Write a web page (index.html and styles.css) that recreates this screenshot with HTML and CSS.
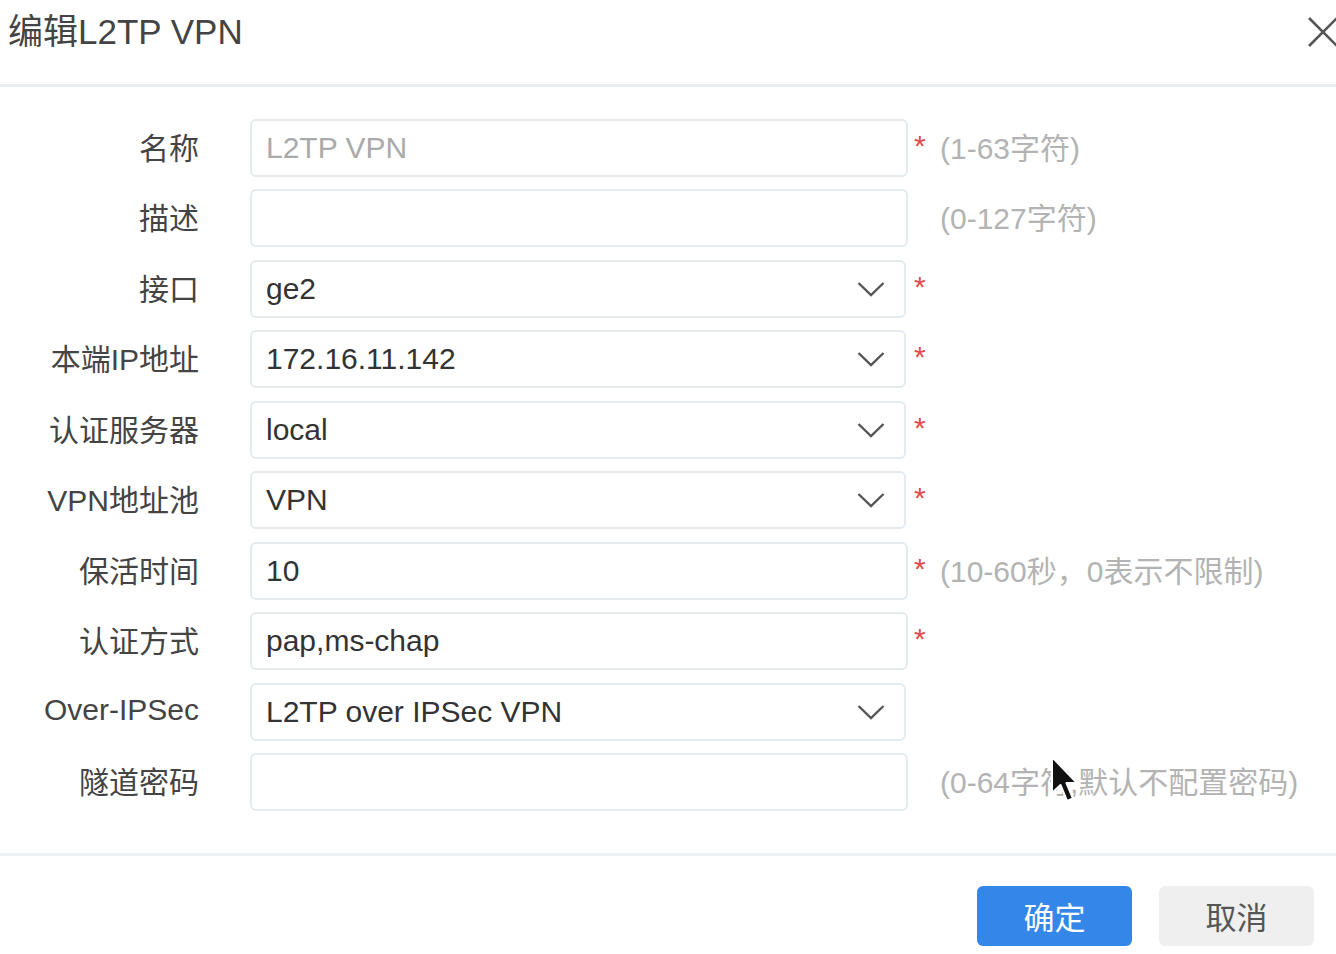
FILE: index.html
```html
<!DOCTYPE html>
<html lang="zh-CN">
<head>
    <meta charset="UTF-8">
    <title>编辑L2TP VPN</title>
    <link rel="stylesheet" href="styles.css">
</head>
<body>
    <div class="dialog">
        <div class="dialog-header">
            <h1 class="dialog-title">编辑L2TP VPN</h1>
            <svg class="close-btn" width="32" height="32" viewBox="0 0 32 32">
                <path d="M2 2 L30 30 M30 2 L2 30" stroke="#555" stroke-width="2.6" fill="none"/>
            </svg>
        </div>

        <div class="form">
            <div class="row">
                <label class="label">名称</label>
                <input class="field disabled" type="text" value="L2TP VPN">
                <span class="mark">*</span>
                <span class="hint">(1-63字符)</span>
            </div>
            <div class="row">
                <label class="label">描述</label>
                <input class="field" type="text" value="">
                <span class="mark"></span>
                <span class="hint">(0-127字符)</span>
            </div>
            <div class="row">
                <label class="label">接口</label>
                <div class="field select">
                    <span>ge2</span>
                    <svg class="chevron" width="28" height="16" viewBox="0 0 28 16"><path d="M1.5 2 L14 14 L26.5 2" stroke="#555" stroke-width="2.4" fill="none"/></svg>
                </div>
                <span class="mark">*</span>
            </div>
            <div class="row">
                <label class="label">本端IP地址</label>
                <div class="field select">
                    <span>172.16.11.142</span>
                    <svg class="chevron" width="28" height="16" viewBox="0 0 28 16"><path d="M1.5 2 L14 14 L26.5 2" stroke="#555" stroke-width="2.4" fill="none"/></svg>
                </div>
                <span class="mark">*</span>
            </div>
            <div class="row">
                <label class="label">认证服务器</label>
                <div class="field select">
                    <span>local</span>
                    <svg class="chevron" width="28" height="16" viewBox="0 0 28 16"><path d="M1.5 2 L14 14 L26.5 2" stroke="#555" stroke-width="2.4" fill="none"/></svg>
                </div>
                <span class="mark">*</span>
            </div>
            <div class="row">
                <label class="label">VPN地址池</label>
                <div class="field select">
                    <span>VPN</span>
                    <svg class="chevron" width="28" height="16" viewBox="0 0 28 16"><path d="M1.5 2 L14 14 L26.5 2" stroke="#555" stroke-width="2.4" fill="none"/></svg>
                </div>
                <span class="mark">*</span>
            </div>
            <div class="row">
                <label class="label">保活时间</label>
                <input class="field" type="text" value="10">
                <span class="mark">*</span>
                <span class="hint">(10-60秒，0表示不限制)</span>
            </div>
            <div class="row">
                <label class="label">认证方式</label>
                <input class="field" type="text" value="pap,ms-chap">
                <span class="mark">*</span>
            </div>
            <div class="row">
                <label class="label">Over-IPSec</label>
                <div class="field select">
                    <span>L2TP over IPSec VPN</span>
                    <svg class="chevron" width="28" height="16" viewBox="0 0 28 16"><path d="M1.5 2 L14 14 L26.5 2" stroke="#555" stroke-width="2.4" fill="none"/></svg>
                </div>
                <span class="mark"></span>
            </div>
            <div class="row">
                <label class="label">隧道密码</label>
                <input class="field" type="password" value="">
                <span class="mark"></span>
                <span class="hint">(0-64字符,默认不配置密码)</span>
            </div>
        </div>

        <div class="dialog-footer">
            <button class="btn btn-primary">确定</button>
            <button class="btn btn-default">取消</button>
        </div>

        <!-- mouse pointer caught in the screenshot -->
        <svg class="cursor" width="28" height="50" viewBox="0 0 28 50">
            <path d="M2 2 L2 38 L10.5 30 L17 46 L23 43.5 L16.5 28 L27 28 Z" fill="#111" stroke="#fff" stroke-width="2" stroke-linejoin="round"/>
        </svg>
    </div>
</body>
</html>
```

FILE: styles.css
```css
body {
    margin: 0;
    background: #fff;
    font-family: "Liberation Sans", "Noto Sans CJK SC", sans-serif;
    color: #333;
    overflow: hidden;
}
.dialog {
    position: relative;
    width: 1336px;
    height: 954px;
}
.dialog-header {
    display: flex;
    justify-content: space-between;
    align-items: flex-start;
    height: 72px;
    padding: 12px 0 0 8px;
    border-bottom: 3px solid #e8edf2;
}
.dialog-title {
    margin: 0;
    font-size: 35px;
    font-weight: normal;
    line-height: 40px;
    color: #444;
}
.close-btn {
    margin-top: 4px;
    margin-right: -3px;
}
.form {
    display: flex;
    flex-direction: column;
    gap: 12.44px;
    padding-top: 32px;
}
.row {
    display: flex;
    align-items: center;
    height: 58px;
}
.label {
    width: 199px;
    margin-right: 51px;
    padding-bottom: 4px;
    text-align: right;
    font-size: 30px;
    color: #444;
    white-space: nowrap;
}
.field {
    box-sizing: border-box;
    width: 658px;
    height: 58px;
    margin: 0;
    padding: 0 14px;
    border: 2px solid #e5eaef;
    border-radius: 6px;
    background: #fff;
    font: inherit;
    font-size: 30px;
    color: #333;
    outline: none;
}
.field.disabled {
    color: #aaa;
}
.select {
    display: flex;
    align-items: center;
    justify-content: space-between;
    width: 656px;
    margin-right: 2px;
    padding-right: 19px;
}
.chevron {
    flex: none;
}
.mark {
    box-sizing: border-box;
    width: 32px;
    padding-left: 6px;
    padding-bottom: 4px;
    font-size: 30px;
    color: #e54b4b;
}
.hint {
    padding-bottom: 4px;
    font-size: 30px;
    color: #b3b3b3;
    white-space: nowrap;
}
.dialog-footer {
    display: flex;
    justify-content: flex-end;
    gap: 27px;
    margin-top: 42px;
    padding: 30px 22px 0 0;
    border-top: 3px solid #eef1f4;
}
.btn {
    width: 155px;
    height: 60px;
    border: none;
    border-radius: 6px;
    font-family: inherit;
    font-size: 31px;
    cursor: pointer;
}
.btn-primary {
    background: #3486e8;
    color: #fff;
}
.btn-default {
    background: #efefef;
    color: #555;
}
.cursor {
    position: absolute;
    left: 1050px;
    top: 755px;
}
```
